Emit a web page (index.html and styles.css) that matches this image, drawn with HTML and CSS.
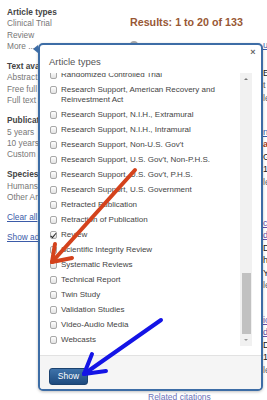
FILE: index.html
```html
<!DOCTYPE html>
<html lang="en">
<head>
    <meta charset="UTF-8">
    <meta name="viewport" content="width=device-width, initial-scale=1.0">
    <title>Article types filter</title>
    <link rel="stylesheet" href="styles.css">
</head>
<body>
    <div class="page">
        <aside class="filters">
            <div class="filter-group">
                <div class="filter-title">Article types</div>
                <div>Clinical Trial</div>
                <div>Review</div>
                <div>More ...</div>
            </div>
            <div class="filter-group">
                <div class="filter-title">Text availability</div>
                <div>Abstract available</div>
                <div>Free full text available</div>
                <div>Full text available</div>
            </div>
            <div class="filter-group">
                <div class="filter-title">Publication dates</div>
                <div>5 years</div>
                <div>10 years</div>
                <div>Custom range...</div>
            </div>
            <div class="filter-group">
                <div class="filter-title">Species</div>
                <div>Humans</div>
                <div>Other Animals</div>
            </div>
            <div class="filter-links">
                <a href="#">Clear all</a>
                <a href="#">Show additional filters</a>
            </div>
        </aside>

        <main class="results">
            <h2 class="results-count">Results: 1 to 20 of 133</h2>
            <div class="pager-dot"></div>
            <a href="#" class="related">Related citations</a>
        </main>

        <div class="peek">
            <div class="peek-group first"><a href="#">u</a></div>
            <div class="peek-group g2">
                <div class="dark">E.</div>
                <div>t</div>
                <div>le</div>
            </div>
            <div class="peek-group g3">
                <div><a href="#">ne</a></div>
                <div class="dark"><b class="hit">a</b>r</div>
                <div class="dark">G</div>
                <div class="dark">12</div>
                <div>le</div>
            </div>
            <div class="peek-group g4">
                <div><a href="#" class="seen">co</a></div>
                <div><a href="#" class="seen">da</a></div>
                <div class="dark">D</div>
                <div class="dark">h</div>
                <div class="dark">Y</div>
                <div>le</div>
            </div>
            <div class="peek-group g5">
                <div><a href="#" class="seen">io</a></div>
                <div><a href="#" class="seen">di</a></div>
                <div class="dark">D</div>
                <div class="dark">1</div>
                <div>le</div>
            </div>
        </div>
    </div>

    <div class="popup">
        <span class="popup-pointer"></span>
        <span class="popup-close">×</span>
        <div class="popup-title">Article types</div>

        <div class="popup-body">
            <div class="option-list">
                <div class="options">
                    <label class="option"><span class="box"></span>Randomized Controlled Trial</label>
                    <label class="option"><span class="box"></span>Research Support, American Recovery and Reinvestment Act</label>
                    <label class="option"><span class="box"></span>Research Support, N.I.H., Extramural</label>
                    <label class="option"><span class="box"></span>Research Support, N.I.H., Intramural</label>
                    <label class="option"><span class="box"></span>Research Support, Non-U.S. Gov't</label>
                    <label class="option"><span class="box"></span>Research Support, U.S. Gov't, Non-P.H.S.</label>
                    <label class="option"><span class="box"></span>Research Support, U.S. Gov't, P.H.S.</label>
                    <label class="option"><span class="box"></span>Research Support, U.S. Government</label>
                    <label class="option"><span class="box"></span>Retracted Publication</label>
                    <label class="option"><span class="box"></span>Retraction of Publication</label>
                    <label class="option"><span class="box checked"></span>Review</label>
                    <label class="option"><span class="box"></span>Scientific Integrity Review</label>
                    <label class="option"><span class="box"></span>Systematic Reviews</label>
                    <label class="option"><span class="box"></span>Technical Report</label>
                    <label class="option"><span class="box"></span>Twin Study</label>
                    <label class="option"><span class="box"></span>Validation Studies</label>
                    <label class="option"><span class="box"></span>Video-Audio Media</label>
                    <label class="option"><span class="box"></span>Webcasts</label>
                </div>
            </div>
            <div class="scrollbar">
                <div class="scroll-btn"><span class="arrow-up"></span></div>
                <div class="scroll-track"><div class="scroll-thumb"></div></div>
                <div class="scroll-btn"><span class="arrow-down"></span></div>
            </div>
        </div>

        <div class="popup-footer">
            <button class="show-btn">Show</button>
        </div>
    </div>

    <!-- hand-drawn annotation arrows -->
    <svg class="marks" width="267" height="400" viewBox="0 0 267 400">
        <g class="mark-red">
            <path d="M135 170 L52 262"/>
            <path d="M52 262 L55 244"/>
            <path d="M52 262 L72 258"/>
        </g>
        <g class="mark-blue">
            <path d="M161 320 L84 374"/>
            <path d="M84 374 L92 354"/>
            <path d="M84 374 L106 371"/>
        </g>
    </svg>
</body>
</html>
```

FILE: styles.css
```css
* {
    margin: 0;
    padding: 0;
    box-sizing: border-box;
}

body {
    font-family: "Liberation Sans", Arial, sans-serif;
    background: #fff;
    color: #333;
    width: 267px;
    height: 400px;
    overflow: hidden;
    position: relative;
}

a {
    color: #3b5ba8;
    text-decoration: underline;
}

.page {
    display: grid;
    grid-template-columns: 123px 140px 4px;
    height: 402px;
}

/* left filter column */
.filters {
    padding: 6.8px 0 0 7px;
    font-size: 8.3px;
    line-height: 11.4px;
    color: #777;
    white-space: nowrap;
    overflow: hidden;
}

.filter-group {
    margin-bottom: 8.6px;
}

.filter-title {
    font-weight: bold;
    color: #444;
}

.filter-links {
    margin-top: 7.1px;
    display: flex;
    flex-direction: column;
    gap: 8.6px;
}

/* results column */
.results {
    padding: 15.5px 0 0 7px;
    display: flex;
    flex-direction: column;
    white-space: nowrap;
}

.results-count {
    font-size: 10.7px;
    line-height: 13px;
    font-weight: bold;
    color: #985735;
}

.pager-dot {
    width: 8px;
    height: 8px;
    border-radius: 50%;
    background: #aaa;
    margin-top: 12.5px;
}

.related {
    margin-top: auto;
    padding-left: 18px;
    font-size: 8.5px;
    line-height: 10px;
    color: #6b72b8;
}

/* slice of the citations visible right of the popup */
.peek {
    overflow: hidden;
    white-space: nowrap;
    font-size: 9px;
    line-height: 12.5px;
    color: #666;
}

.peek-group.first { margin-top: 38.75px; }
.peek-group.g2 { margin-top: 15.5px; }
.peek-group.g3 { margin-top: 21.5px; }
.peek-group.g4 { margin-top: 28.5px; }
.peek-group.g5 { margin-top: 22px; }

.peek .dark {
    color: #222;
}

.peek .hit {
    color: #a0391e;
}

.peek a.seen {
    color: #6a4fa5;
}

/* popup */
.popup {
    position: absolute;
    left: 38px;
    top: 43px;
    width: 225px;
    height: 348px;
    border: 2px solid #3d6da6;
    border-radius: 5px;
    background: #fff;
    display: flex;
    flex-direction: column;
    box-shadow: 0 1px 3px rgba(0, 0, 0, 0.25);
}

.popup-pointer {
    position: absolute;
    left: -7px;
    top: 0;
    width: 0;
    height: 0;
    border-top: 4.5px solid transparent;
    border-bottom: 4.5px solid transparent;
    border-right: 5px solid #3d6da6;
}

.popup-close {
    position: absolute;
    right: 5.5px;
    top: 3px;
    font-size: 9px;
    line-height: 8px;
    font-weight: bold;
    color: #666;
}

.popup-title {
    padding: 11px 0 0 9px;
    font-size: 9.5px;
    line-height: 12px;
    color: #555;
}

.popup-body {
    margin: 5px 0 0 4px;
    width: 208px;
    height: 273px;
    display: flex;
}

.option-list {
    flex: 1;
    overflow: hidden;
}

.options {
    margin-top: -3px;
    padding-left: 5.5px;
}

.option {
    display: flex;
    align-items: flex-start;
    gap: 4px;
    font-size: 8px;
    line-height: 10px;
    margin-bottom: 5px;
    color: #444;
}

.box {
    flex: none;
    position: relative;
    width: 7.5px;
    height: 7.5px;
    margin-top: 1.25px;
    border: 1px solid #a9a9a9;
    border-radius: 2px;
    background: linear-gradient(#fff, #e2e2e2);
}

.box.checked::after {
    content: "";
    position: absolute;
    left: 1.6px;
    top: -0.5px;
    width: 2px;
    height: 4.5px;
    border-right: 1.6px solid #222;
    border-bottom: 1.6px solid #222;
    transform: rotate(40deg);
}

.scrollbar {
    flex: none;
    width: 12px;
    background: #f1f1f1;
    display: flex;
    flex-direction: column;
}

.scroll-btn {
    height: 11px;
    display: flex;
    align-items: center;
    justify-content: center;
}

.scroll-btn:last-child {
    height: 12px;
}

.arrow-up,
.arrow-down {
    width: 0;
    height: 0;
    border-left: 2.5px solid transparent;
    border-right: 2.5px solid transparent;
}

.arrow-up {
    border-bottom: 2.5px solid #777;
}

.arrow-down {
    border-top: 2.5px solid #999;
}

.scroll-track {
    flex: 1;
    display: flex;
    flex-direction: column;
    justify-content: flex-end;
    padding: 0 1px 0 2px;
}

.scroll-thumb {
    height: 61px;
    background: #c1c1c1;
}

.popup-footer {
    flex: 1;
    margin-top: 9px;
    padding: 9px 0 0 9px;
    border-top: 1px solid #e2e2e2;
    background: #f5f5f5;
    border-radius: 0 0 3px 3px;
}

.show-btn {
    width: 39px;
    height: 17px;
    border: 1px solid #1b426f;
    border-radius: 3px;
    background: linear-gradient(#3f73aa, #1d4a7e);
    color: #fff;
    font-family: inherit;
    font-size: 8.5px;
    line-height: 15px;
    text-align: center;
}

/* annotation arrows */
.marks {
    position: absolute;
    left: 0;
    top: 0;
    pointer-events: none;
}

.marks path {
    fill: none;
    stroke-width: 4;
    stroke-linecap: round;
}

.mark-red path {
    stroke: #d4421c;
}

.mark-blue path {
    stroke: #1414e6;
}
```
